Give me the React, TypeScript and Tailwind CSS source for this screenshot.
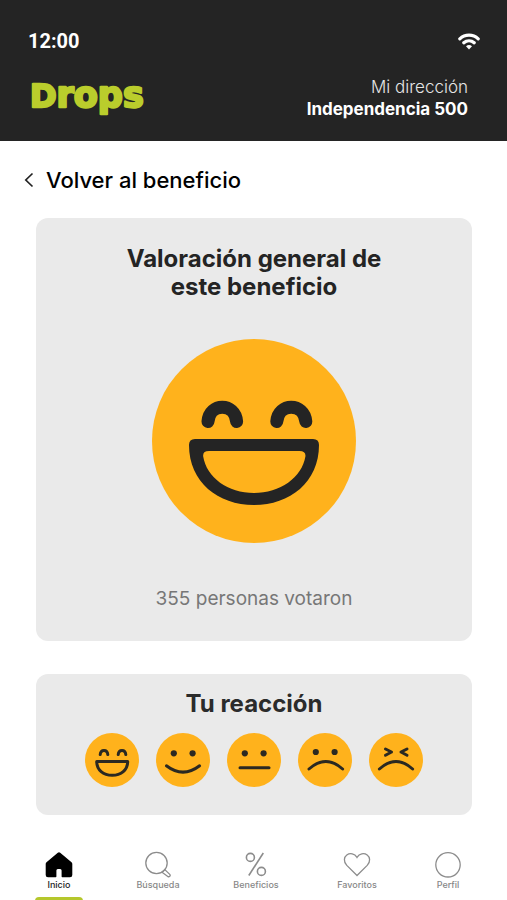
import type { ReactNode } from 'react'

type FaceProps = {
  children: ReactNode
}

const Face = ({ children }: FaceProps) => (
  <svg
    viewBox="0 0 54 54"
    className="block size-full"
    fill="none"
    stroke="#2b2922"
    strokeWidth="3"
    strokeLinecap="round"
    strokeLinejoin="round"
    aria-hidden="true"
  >
    <circle cx="27" cy="27" r="27" fill="#ffb21c" stroke="none" />
    {children}
  </svg>
)

const Eyes = ({ y }: { y: number }) => (
  <g fill="#2b2922" stroke="none">
    <circle cx="17.8" cy={y} r="3.1" />
    <circle cx="36.6" cy={y} r="3.1" />
  </g>
)

const reactions = [
  {
    name: 'Muy contento',
    face: (
      <>
        <path d="M15.2 21.6C15.6 16 22.4 16 22.8 21.6M33.2 21.6C33.6 16 40.4 16 40.8 21.6" />
        <path d="M11.7 28.5H42.7C42.7 37 36 42.3 27.2 42.3S11.7 37 11.7 28.5Z" />
      </>
    ),
  },
  {
    name: 'Contento',
    face: (
      <>
        <Eyes y={20.3} />
        <path d="M10.4 32.8Q27 45.5 43.6 32.8" />
      </>
    ),
  },
  {
    name: 'Neutral',
    face: (
      <>
        <Eyes y={20.3} />
        <path d="M13 34.7H42" />
      </>
    ),
  },
  {
    name: 'Triste',
    face: (
      <>
        <Eyes y={19} />
        <path d="M11 36Q27.8 21 44.6 36" />
      </>
    ),
  },
  {
    name: 'Enojado',
    face: (
      <>
        <path d="M16.5 16L22.5 19L16.5 22.2M38 16L32 19L38 22.2" />
        <path d="M10.4 36Q27 21 43.6 36" />
      </>
    ),
  },
]

const tabs = [
  {
    name: 'Inicio',
    icon: (
      <path
        d="M14 1.2Q14.6 1.2 15.2 1.7L26.5 11.2Q27.3 12 27.3 13V24Q27.3 26.2 25 26.2H17.3Q16.6 26.2 16.6 25.5V19.5Q16.6 18 15.2 18H12.8Q11.4 18 11.4 19.5V25.5Q11.4 26.2 10.7 26.2H3Q.7 26.2.7 24V13Q.7 12 1.5 11.2L12.8 1.7Q13.4 1.2 14 1.2Z"
        fill="#000"
        stroke="none"
      />
    ),
  },
  {
    name: 'Búsqueda',
    icon: (
      <>
        <circle cx="12.5" cy="12" r="10.7" />
        <path d="M18 21.2L20.8 18.6L26 23.6Q26.6 24.4 25.8 25.2Q24.8 26.2 23.8 25.4Z" />
      </>
    ),
  },
  {
    name: 'Beneficios',
    icon: (
      <g strokeWidth="1.6">
        <circle cx="8.4" cy="6.4" r="4" />
        <circle cx="19.4" cy="20.4" r="4" />
        <path d="M21.3 2L6.8 24.5" />
      </g>
    ),
  },
  {
    name: 'Favoritos',
    icon: (
      <path d="M14 24.5L3.8 14.4C.2 10.6 1 6 3.8 4C7 1.7 11.6 2.4 14 6.4C16.4 2.4 21 1.7 24.2 4C27 6 27.8 10.6 24.2 14.4Z" />
    ),
  },
  {
    name: 'Perfil',
    icon: <circle cx="14" cy="13.8" r="12.2" />,
  },
]

const Logo = () => (
  <svg
    viewBox="0 0 124 44"
    className="h-11 w-[124px] font-['DejaVu_Sans',sans-serif] font-bold"
    fill="#bacd2c"
    stroke="#bacd2c"
    strokeWidth="2.4"
    strokeLinejoin="round"
  >
    <text x="2" y="31" fontSize="32">
      D<tspan fontSize="35">rops</tspan>
    </text>
  </svg>
)

const Header = () => (
  <header className="bg-[#242424] pr-[39px] pl-7 pt-[29px] pb-[21px] text-white">
    <div className="-mr-3 flex h-6 items-center justify-between">
      <span className="font-['Roboto',sans-serif] text-xl font-bold">12:00</span>
      <svg
        viewBox="0 0 22 17"
        className="w-[22px]"
        fill="none"
        stroke="#fff"
        strokeWidth="3.2"
        strokeLinecap="round"
        aria-label="Wifi"
      >
        <path d="M1.8 5.8C7 .8 15 .8 20.2 5.8M5.8 9.8C8.8 7.1 13.2 7.1 16.2 9.8" />
        <path d="M8 13.2Q11 10.8 14 13.2L11 16.4Z" fill="#fff" stroke="none" />
      </svg>
    </div>
    <div className="mt-[23px] flex items-start justify-between">
      <Logo />
      <div className="text-right text-[17px] leading-[22px]">
        <p className="font-light text-[#e6e6e6]">Mi dirección</p>
        <p className="font-bold">Independencia 500</p>
      </div>
    </div>
  </header>
)

const BigFace = () => (
  <svg viewBox="0 0 204 204" className="mt-[38px] w-[204px]" role="img" aria-label="Muy contento">
    <circle cx="102" cy="102" r="102" fill="#ffb21c" />
    <path
      d="M56 82.5C57.5 63.500 83 63.500 84.600 82.500M124.800 82.500C126.400 63.500 152 63.500 153.800 82.500"
      fill="none"
      stroke="#242424"
      strokeWidth="13"
      strokeLinecap="round"
    />
    <path
      d="M43 100H161Q167 100 167 106C167 143 138 166 102 166C66 166 37 143 37 106Q37 100 43 100ZM57 112Q50.5 112 51.2 117.5C54.5 138.5 76 154 102 154C128 154 150 138.5 153.4 117.5Q154 112 147.5 112Z"
      fill="#242424"
      fillRule="evenodd"
    />
  </svg>
)

const App = () => {
  return (
    <div className="flex min-h-screen flex-col bg-white font-['Inter',sans-serif]">
      <Header />
      <main className="flex-1 pr-[35px] pl-9">
        <a href="#" className="mt-6 -ml-3 flex h-[30px] items-center text-[22px] font-medium text-black">
          <svg viewBox="0 0 10 16" className="mr-3 w-[10px]" fill="none" stroke="#222" strokeWidth="1.7">
            <path d="M8.5 1.5L1.8 8L8.5 14.5" />
          </svg>
          Volver al beneficio
        </a>

        <section className="mt-[23px] flex flex-col items-center rounded-xl bg-[#eaeaea] pt-[27px] pb-7 text-center">
          <h1 className="text-2xl leading-7 font-bold text-[#242424]">
            Valoración general de
            <br />
            este beneficio
          </h1>
          <BigFace />
          <p className="mt-[42px] text-[19px] leading-7 text-[#777]">355 personas votaron</p>
        </section>

        <section className="mt-[33px] rounded-xl bg-[#eaeaea] pt-4 pb-7 text-center">
          <h2 className="text-2xl leading-7 font-bold text-[#2b2b2b]">Tu reacción</h2>
          <div className="mt-[15px] flex justify-center gap-[17px]">
            {reactions.map(({ name, face }) => (
              <button key={name} type="button" aria-label={name} className="size-[54px] rounded-full">
                <Face>{face}</Face>
              </button>
            ))}
          </div>
        </section>
      </main>

      <nav className="mt-9 grid grid-cols-[98fr_100fr_96fr_106fr_76fr] pr-[21px] pl-[10px]">
        {tabs.map(({ name, icon }, i) => (
          <a
            key={name}
            href="#"
            className={`flex flex-col items-center text-[9px] leading-3 font-medium ${i === 0 ? 'text-[#222]' : 'text-[#888]'}`}
          >
            <svg viewBox="0 0 28 28" className="w-7" fill="none" stroke="#8c8c8c" strokeWidth="1.3" aria-hidden="true">
              {icon}
            </svg>
            {name}
            {i === 0 && <span className="mt-[6px] h-1 w-12 rounded-t-sm bg-[#b5c72c]" />}
          </a>
        ))}
      </nav>
    </div>
  )
}

export default App
